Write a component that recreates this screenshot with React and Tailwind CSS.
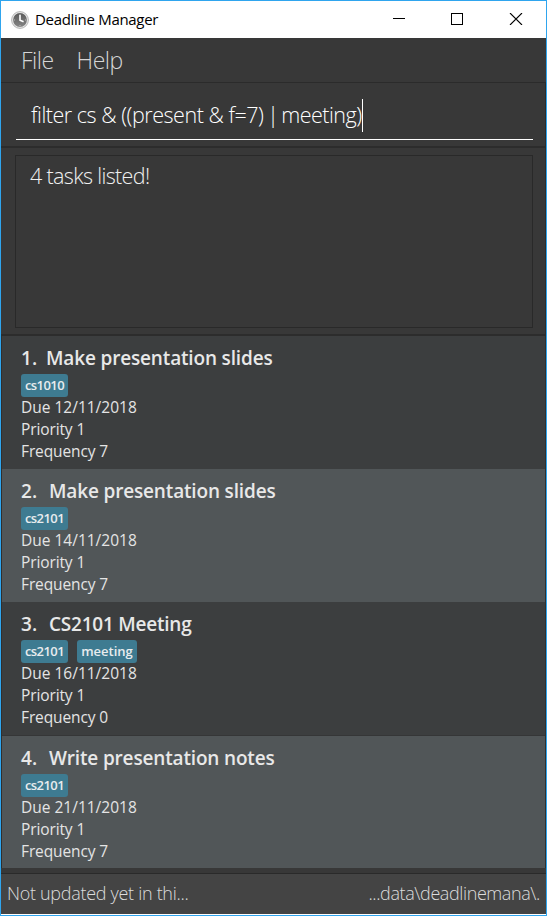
const tasks = [
  { n: 1, title: "Make presentation slides", track: "tracking-[-0.16px]", tags: ["cs1010"], due: "12/11/2018", priority: 1, frequency: 7 },
  { n: 2, title: "Make presentation slides", track: "tracking-[-0.16px]", tags: ["cs2101"], due: "14/11/2018", priority: 1, frequency: 7 },
  { n: 3, title: "CS2101 Meeting", track: "tracking-[-0.23px]", tags: ["cs2101", "meeting"], due: "16/11/2018", priority: 1, frequency: 0 },
  { n: 4, title: "Write presentation notes", track: "tracking-[-0.16px]", tags: ["cs2101"], due: "21/11/2018", priority: 1, frequency: 7 },
];

function ClockIcon() {
  return (
    <svg width="18" height="18" viewBox="0 0 18 18" className="shrink-0">
      <defs>
        <linearGradient id="face" x1="0" y1="0" x2="0" y2="1">
          <stop offset="0" stopColor="#5a5a5a" />
          <stop offset="1" stopColor="#858585" />
        </linearGradient>
      </defs>
      <circle cx="9" cy="9" r="8.4" fill="#e8e8e8" stroke="#b5b5b5" strokeWidth="1" />
      <circle cx="9" cy="9" r="6.9" fill="url(#face)" />
      <path d="M9 2.8v1.2M9 14v1.2M2.8 9H4M14 9h1.2" stroke="#bdbdbd" strokeWidth="1" />
      <path d="M9 4v5.2l3.6 1.6" fill="none" stroke="#ffffff" strokeWidth="1.6" />
    </svg>
  );
}

function TitleBar() {
  return (
    <header className="flex h-[37px] shrink-0 items-center bg-white pl-[10px]">
      <ClockIcon />
      <span className="-mt-px ml-[6px] text-[15px] leading-5 tracking-[-0.3px] text-black">Deadline Manager</span>
      <div className="mr-[23px] ml-auto flex items-center gap-[46px] pb-px">
        <svg width="12" height="12" viewBox="0 0 12 12" shapeRendering="crispEdges">
          <rect y="5" width="12" height="1" fill="#000" />
        </svg>
        <svg width="12" height="12" viewBox="0 0 12 12" shapeRendering="crispEdges">
          <rect x="0.5" y="0.5" width="11" height="11" fill="none" stroke="#000" />
        </svg>
        <svg width="14" height="12" viewBox="0 0 14 12">
          <path d="M1 0l12 12M13 0l-12 12" stroke="#000" strokeWidth="1.1" />
        </svg>
      </div>
    </header>
  );
}

function Task({ task }) {
  const even = task.n % 2 === 0;
  return (
    <li className={`h-[133px] pl-[19px] ${even ? "bg-[#515658]" : "bg-[#3c3e3f]"} ${task.n === 4 ? "border-t border-[#353637]" : ""}`}>
      <div className="flex h-[38px] pt-[9px] text-[19px] leading-[26px] font-semibold text-[#e8e8e8]">
        <span className={task.n === 1 ? "w-[25px]" : "w-[28px]"}>{task.n}.</span>
        <span className={task.track}>{task.title}</span>
      </div>
      <div className="flex gap-[9px]">
        {task.tags.map((t) => (
          <span
            key={t}
            className={`flex h-[23px] items-center justify-center rounded-[3px] bg-[#3e7b91] text-[13px] font-semibold text-[#e8ecee] ${
              t === "meeting" ? "w-[60px]" : "w-[47px] tracking-[-0.55px]"
            }`}
          >
            {t}
          </span>
        ))}
      </div>
      <div className="-mt-px text-[15.5px] leading-[22px] text-[#e4e4e4]">
        <p>Due {task.due}</p>
        <p className="tracking-[-0.12px]">Priority {task.priority}</p>
        <p className="tracking-[-0.12px]">Frequency {task.frequency}</p>
      </div>
    </li>
  );
}

export default function App() {
  return (
    <div className="flex h-[916px] w-[547px] flex-col overflow-hidden border border-[#2fa5ee] bg-[#383838] font-['Open_Sans','Noto_Sans',sans-serif] whitespace-nowrap">
      <TitleBar />
      <nav className="flex h-11 shrink-0 items-center gap-[23px] pl-[20px] text-[23px] font-light tracking-[-0.5px] text-[#d6d6d6]">
        <span>File</span>
        <span>Help</span>
      </nav>
      <section className="h-[66px] shrink-0 border-t border-r border-b-2 border-[#2b2b2b] border-b-[#2c2c2c] pt-[13px] pl-[15px]">
        <div className="flex h-[44px] w-[517px] items-start border-b border-white pt-[3px] pl-[15px]">
          <span className="text-[21.5px] leading-8 font-light tracking-[-0.47px] whitespace-pre text-white">
            {"filter cs & ((present & f=7)"}
            <span className="tracking-[-1.7px]">{" | "}</span>
            <span className="tracking-[-0.5px]">meeting)</span>
          </span>
          <span className="h-[33px] w-px bg-white" />
        </div>
      </section>
      <section className="h-[188px] shrink-0 border-r border-b-2 border-[#2c2c2c] pt-[7px] pl-[14px]">
        <div className="h-[173px] w-[518px] border border-[#292929] pt-1 pl-[14px] text-[21.5px] leading-8 font-light tracking-[-0.65px] text-[#f0f0f0]">
          4 tasks listed!
        </div>
      </section>
      <ul className="h-[532px] shrink-0 overflow-hidden border-x border-[#2f2f2f]">
        {tasks.map((t) => (
          <Task key={t.n} task={t} />
        ))}
      </ul>
      <footer className="mt-[5px] flex h-[41px] shrink-0 items-center justify-between border-t border-[#2a2a2a] bg-[#444444] pr-[6px] pb-[2px] pl-[6px] text-[18px] font-light text-[#dcdcdc]">
        <span className="tracking-[-0.3px]">Not updated yet in thi...</span>
        <span className="tracking-[-0.4px]">...data\deadlinemana\.</span>
      </footer>
      <div className="h-px shrink-0 bg-white" />
    </div>
  );
}
